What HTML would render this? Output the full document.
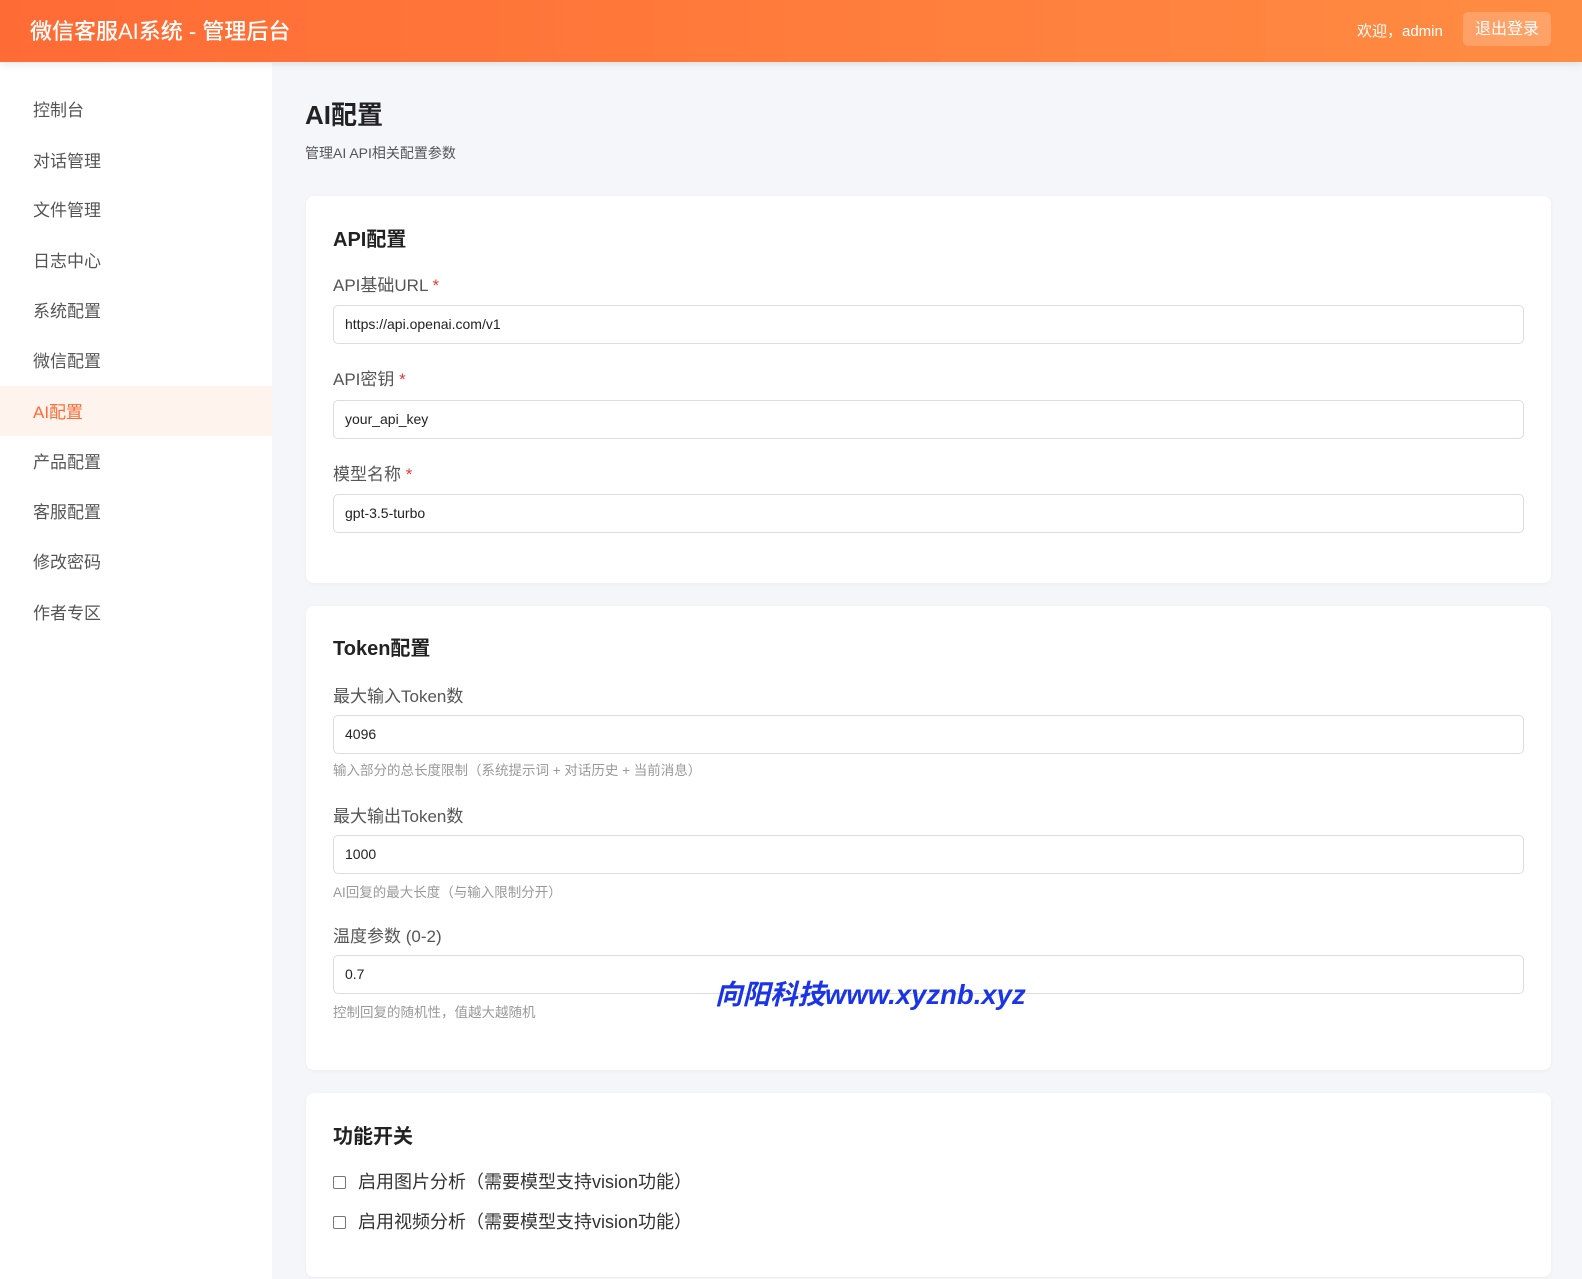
<!DOCTYPE html>
<html><head><meta charset="utf-8"><style>
*{box-sizing:border-box;margin:0;padding:0}
body{width:1582px;height:1279px;overflow:hidden;background:#f5f6fa;font-family:"Liberation Sans","Noto Sans CJK SC",sans-serif;position:relative}
.hdr{position:absolute;left:0;top:0;width:1582px;height:62px;background:linear-gradient(90deg,#ff6b35,#ff8c42);box-shadow:0 2px 8px rgba(0,0,0,.1);z-index:2}
.hdr .t{position:absolute;left:30px;top:14px;color:#fff;font-size:22px;font-weight:500}
.hdr .w{position:absolute;left:1357px;top:20px;color:#fff;font-size:15px}
.hdr .b{position:absolute;left:1463px;top:12px;width:88px;height:34px;border-radius:5px;background:rgba(255,255,255,.2);color:#fff;font-size:16px;text-align:center;line-height:36px}
.side{position:absolute;left:0;top:62px;width:272px;height:1217px;background:#fff}
.nav{position:absolute;left:0;width:272px;height:50px;line-height:54px;padding-left:33px;font-size:17px;color:#555}
.nav.a{background:#fff3ee;color:#ff6b35}
.abs{position:absolute}
.card{position:absolute;left:306px;width:1245px;background:#fff;border-radius:8px;box-shadow:0 1px 4px rgba(0,0,0,.04)}
.h{position:absolute;left:333px;font-size:20px;font-weight:bold;color:#222}
.lb{position:absolute;left:333px;font-size:17px;color:#555}
.lb i{color:#e53935;font-style:normal}
.in{position:absolute;left:333px;width:1191px;height:39px;border:1px solid #ddd;border-radius:5px;background:#fff;padding-left:11px;line-height:37px;font-size:14px;color:#222}
.hp{position:absolute;left:333px;font-size:13.5px;color:#999}
.cb{position:absolute;left:333px;font-size:18px;color:#333}
.cb span{display:inline-block;width:13px;height:13px;border:1px solid #777;border-radius:2px;margin-right:12px;vertical-align:-1px}
</style></head><body>
<div class="hdr"><div class="t">微信客服AI系统 - 管理后台</div><div class="w">欢迎，admin</div><div class="b">退出登录</div></div>
<div class="side">
<div class="nav" style="top:22px">控制台</div>
<div class="nav" style="top:73px">对话管理</div>
<div class="nav" style="top:122px">文件管理</div>
<div class="nav" style="top:173px">日志中心</div>
<div class="nav" style="top:223px">系统配置</div>
<div class="nav" style="top:273px">微信配置</div>
<div class="nav a" style="top:324px">AI配置</div>
<div class="nav" style="top:374px">产品配置</div>
<div class="nav" style="top:424px">客服配置</div>
<div class="nav" style="top:474px">修改密码</div>
<div class="nav" style="top:525px">作者专区</div>
</div>
<div class="abs" style="left:305px;top:95px;font-size:26px;font-weight:bold;color:#222">AI配置</div>
<div class="abs" style="left:305px;top:143px;font-size:14px;color:#555">管理AI API相关配置参数</div>

<div class="card" style="top:196px;height:387px"></div>
<div class="h" style="top:223px">API配置</div>
<div class="lb" style="top:271px">API基础URL <i>*</i></div>
<div class="in" style="top:305px">https://api.openai.com/v1</div>
<div class="lb" style="top:365px">API密钥 <i>*</i></div>
<div class="in" style="top:400px">your_api_key</div>
<div class="lb" style="top:460px">模型名称 <i>*</i></div>
<div class="in" style="top:494px">gpt-3.5-turbo</div>

<div class="card" style="top:606px;height:464px"></div>
<div class="h" style="top:632px">Token配置</div>
<div class="lb" style="top:682px">最大输入Token数</div>
<div class="in" style="top:715px">4096</div>
<div class="hp" style="top:759px">输入部分的总长度限制（系统提示词 + 对话历史 + 当前消息）</div>
<div class="lb" style="top:802px">最大输出Token数</div>
<div class="in" style="top:835px">1000</div>
<div class="hp" style="top:881px">AI回复的最大长度（与输入限制分开）</div>
<div class="lb" style="top:922px">温度参数 (0-2)</div>
<div class="in" style="top:955px">0.7</div>
<div class="hp" style="top:1001px">控制回复的随机性，值越大越随机</div>
<div class="abs" style="left:715px;top:972px;font-size:27.5px;font-weight:bold;font-style:italic;color:#1a35e8">向阳科技www.xyznb.xyz</div>

<div class="card" style="top:1093px;height:184px"></div>
<div class="h" style="top:1120px">功能开关</div>
<div class="cb" style="top:1168px"><span></span>启用图片分析（需要模型支持vision功能）</div>
<div class="cb" style="top:1208px"><span></span>启用视频分析（需要模型支持vision功能）</div>
</body></html>
